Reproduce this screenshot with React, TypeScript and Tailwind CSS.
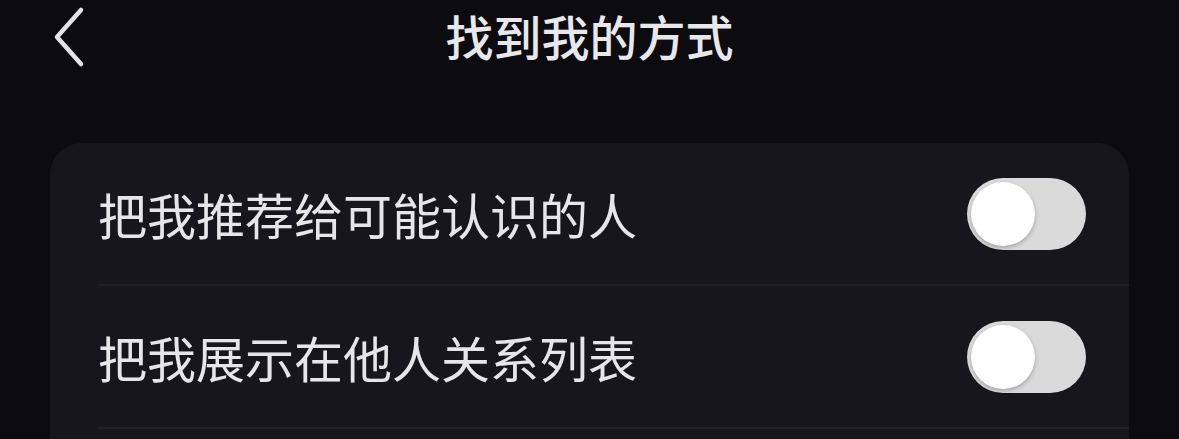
import React from "react";

const cjk = { fontFamily: '"Noto Sans CJK SC", "Noto Sans", sans-serif' };

function Toggle() {
  return (
    <div className="flex h-[72px] w-[119px] items-center rounded-full bg-[#dadada] px-[4px]">
      <div className="h-[64px] w-[64px] rounded-full bg-white shadow-[0_2px_4px_rgba(0,0,0,0.25)]" />
    </div>
  );
}

function Row({ label, last }: { label: string; last?: boolean }) {
  return (
    <div className="flex h-[143px] flex-col">
      <div className="flex flex-1 items-center justify-between pl-[48px] pr-[43px]">
        <span className="text-[49px] leading-none text-[#e6e6e8]">{label}</span>
        <Toggle />
      </div>
      {!last && <div className="ml-[47px] h-[2px] bg-[#222127]" />}
    </div>
  );
}

export default function App() {
  return (
    <div className="h-[439px] w-[1179px] overflow-hidden bg-[#0c0b10]" style={cjk}>
      <header className="relative flex h-[143px] items-start justify-center">
        <button className="absolute left-[48px] top-[2px] p-1" aria-label="返回">
          <svg width="36" height="64" viewBox="0 0 36 64" fill="none">
            <path
              d="M29 4 L5 31 L29 58"
              stroke="#e4e4e6"
              strokeWidth="4.5"
              strokeLinecap="round"
              strokeLinejoin="round"
            />
          </svg>
        </button>
        <h1 className="mt-[11px] text-[48px] font-medium leading-none text-[#e8e8ea]">找到我的方式</h1>
      </header>
      <div className="mx-[50px] rounded-[32px] bg-[#17161c]">
        <Row label="把我推荐给可能认识的人" />
        <Row label="把我展示在他人关系列表" />
        <Row label="" last />
      </div>
    </div>
  );
}
